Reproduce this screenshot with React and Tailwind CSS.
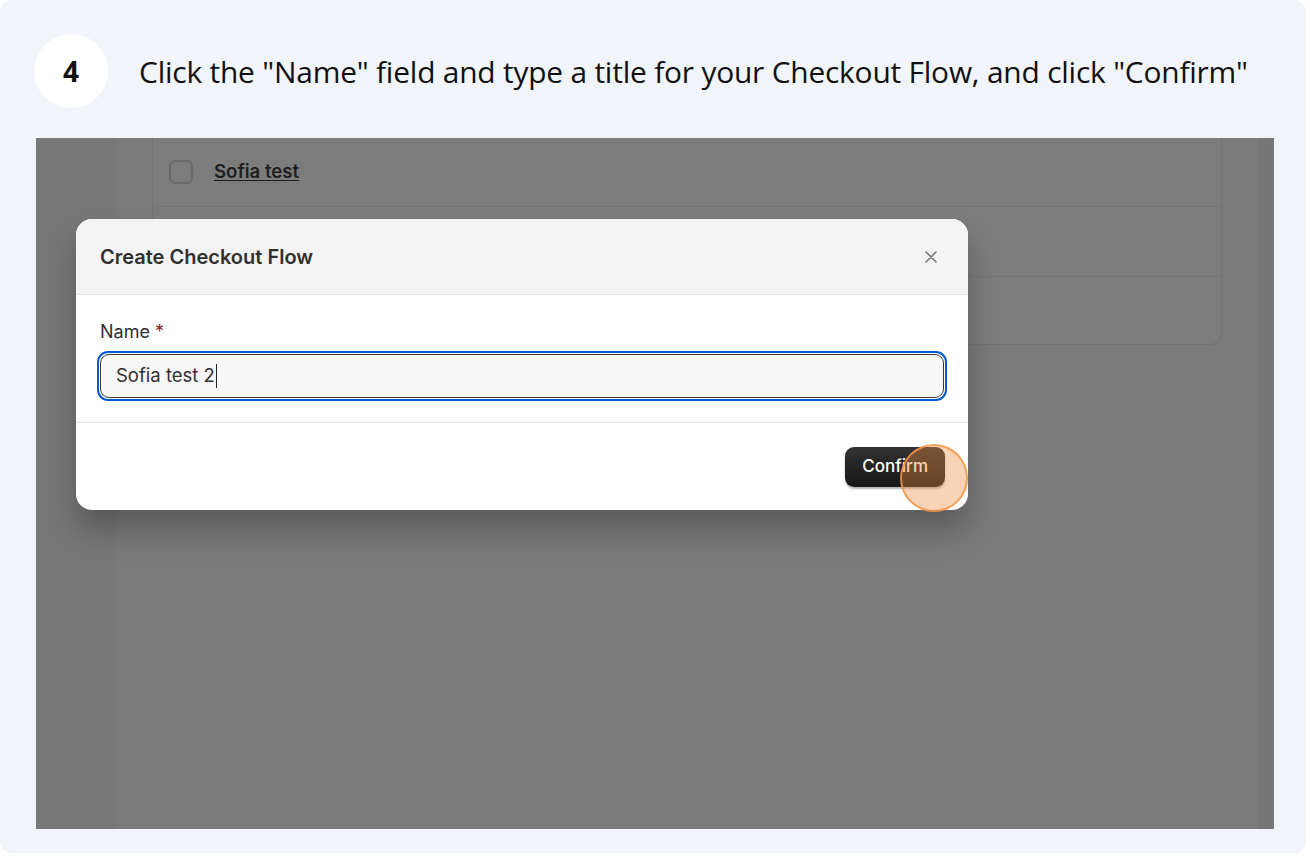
export default function App() {
  return (
    <div className="w-[1310px] h-[856px] bg-white">
      <div className="w-[1306px] h-[853px] rounded-xl bg-[#f1f4f9] flex flex-col">
        {/* step header */}
        <div className="flex items-center pl-[34px] pt-[34px] h-[108px]">
          <div className="w-[74px] h-[74px] rounded-full bg-white flex items-center justify-center shrink-0">
            <span className="text-[28px] font-bold text-[#111] font-['Open_Sans',sans-serif]">4</span>
          </div>
          <p className="ml-[31px] mt-[2px] text-[29.9px] text-[#111] font-['Open_Sans',sans-serif] tracking-[-0.2px]">
            Click the "Name" field and type a title for your Checkout Flow, and click "Confirm"
          </p>
        </div>

        {/* screenshot */}
        <div className="relative ml-[36px] mt-[30px] w-[1238px] h-[691px] bg-[#7a7a7a] overflow-hidden flex font-['Inter',sans-serif]">
          <div className="w-[80px] h-full bg-[#777777]" />
          <div className="flex-1 flex">
            <div className="pl-[36px] w-[1106px]">
              <div className="w-[1070px] border border-t-0 border-[#727272] rounded-b-xl bg-[#7c7c7c]">
                <div className="h-[69px] flex items-center pl-[16px] border-b border-[#747474]">
                  <div className="w-[24px] h-[24px] rounded-md border-2 border-[#6a6a6a]" />
                  <span className="ml-[21px] text-[18.6px] font-semibold text-[#1e1e1e] underline underline-offset-2">Sofia test</span>
                </div>
                <div className="h-[70px] border-b border-[#747474]" />
                <div className="h-[67px] flex">
                  <div className="w-[838px] border-r border-[#777777]" />
                </div>
              </div>
            </div>
            <div className="flex-1" />
            <div className="w-[16px] h-full bg-[#767676]" />
          </div>

          {/* modal */}
          <div className="absolute left-[40px] top-[81px] w-[892px] h-[291px] rounded-2xl bg-white overflow-hidden shadow-[0_20px_30px_rgba(0,0,0,0.25)] flex flex-col">
            <div className="h-[76px] bg-[#f3f3f3] border-b border-[#e3e3e3] flex items-center justify-between px-[24px] shrink-0">
              <h2 className="text-[20px] font-semibold text-[#303030]">Create Checkout Flow</h2>
              <svg width="14" height="14" viewBox="0 0 14 14" className="mr-[6px]">
                <path d="M2 2L12 12M12 2L2 12" stroke="#7a7a7a" strokeWidth="1.6" strokeLinecap="round" />
              </svg>
            </div>
            <div className="h-[128px] border-b border-[#e3e3e3] px-[22px] pt-[25px] shrink-0">
              <div className="text-[18px] text-[#303030] pl-[2px] leading-[24px]">
                Name <span className="text-[#8e1f0b]">*</span>
              </div>
              <div className="mt-[7px] -mx-[1px] h-[50px] rounded-[11px] border-2 border-[#005bd3] p-[1px]">
                <div className="h-full rounded-[9px] border border-[#3a3a3a] bg-[#f7f7f7] flex items-center pl-[15px]">
                  <span className="text-[18.5px] text-[#303030]">Sofia test 2</span>
                  <span className="w-[1px] h-[24px] bg-[#202020] ml-[1px]" />
                </div>
              </div>
            </div>
            <div className="flex-1 flex items-center justify-end pr-[23px]">
              <button className="h-[40px] px-[17px] rounded-[9px] bg-gradient-to-b from-[#333] to-[#161616] text-white text-[17px] font-medium shadow-[0_2px_2px_rgba(0,0,0,0.3)]">
                Confirm
              </button>
            </div>
          </div>

          {/* click marker */}
          <div className="absolute left-[864px] top-[306px] w-[68px] h-[68px] rounded-full bg-[rgba(240,140,60,0.38)] border-2 border-[rgba(240,150,70,0.85)]" />
        </div>
      </div>
    </div>
  );
}
